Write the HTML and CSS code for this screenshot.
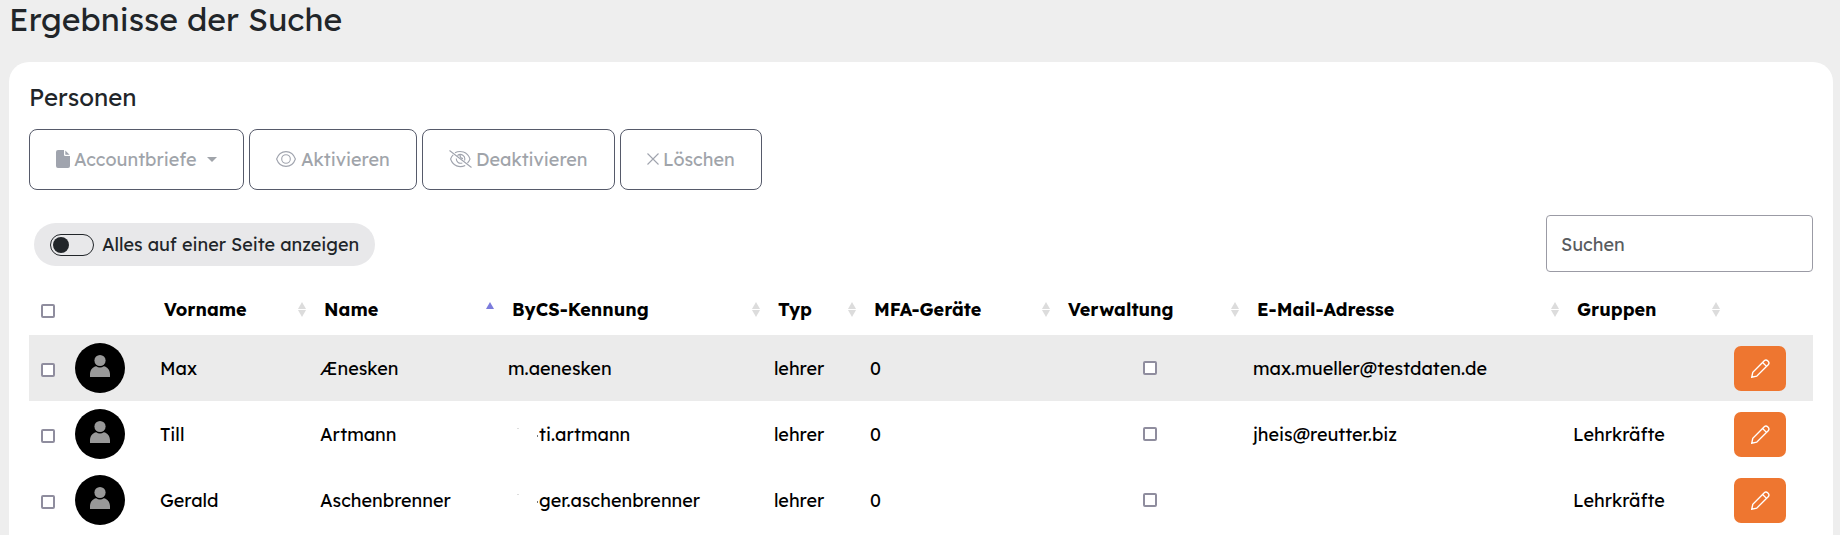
FILE: index.html
```html
<!DOCTYPE html>
<html lang="de">
<head>
<meta charset="utf-8">
<title>Ergebnisse der Suche</title>
<link rel="stylesheet" href="styles.css">
</head>
<body>
<svg class="defs" width="0" height="0">
  <symbol id="person" viewBox="0 0 50 50"><circle cx="25" cy="17.500" r="5.600"/><path d="M15 34v-2.500c0-4.500 2.600-7.700 6.200-8.300 2.200 1.700 5.400 1.700 7.600 0 3.600.6 6.200 3.800 6.200 8.300V34z"/></symbol>
  <symbol id="pencil" viewBox="0 0 18 18"><path d="M.7 17.300l1-4.700L12.800 1.500c1.900-1.700 5.400 1.500 3.700 3.700L5.400 16.300zM11 3.300l3.700 3.700"/></symbol>
</svg>
<h1 class="page-title">Ergebnisse der Suche</h1>
<main class="card">
  <h2 class="card-title">Personen</h2>
  <div class="actions">
    <button class="btn btn-letters" disabled><svg class="icon-file" width="14" height="18" viewBox="0 0 14 18"><path d="M2 0h6v4.500C8 5.500 8.500 6 9.500 6H14v10a2 2 0 0 1-2 2H2a2 2 0 0 1-2-2V2a2 2 0 0 1 2-2zM9.300.4l4.300 4.300H9.300z"/></svg><span>Accountbriefe</span><i class="caret"></i></button>
    <button class="btn btn-on" disabled><svg class="icon-line" width="20" height="16" viewBox="0 0 20 16"><path d="M.6 8C2.300 3.200 6 .6 10 .6S17.700 3.200 19.400 8C17.700 12.800 14 15.400 10 15.400S2.300 12.800.6 8z"/><circle cx="10" cy="8" r="4.300"/></svg><span>Aktivieren</span></button>
    <button class="btn btn-off" disabled><svg class="icon-line" width="23" height="18" viewBox="0 0 23 18"><path d="M.5.500l22 17M6 2.800C11 .1 18.500 1.500 21 9c-.5 1.600-1.400 2.900-2.500 4M4.200 4.800C2.900 6 2.100 7.400 1.600 9c2.300 7 9 9.200 14.600 6.400M8.500 5.500c3.500-2.800 8.500.5 7 5M7.300 8.500c-.2 3.700 3 5.500 6 4.400M11 5c-.1 2 .9 3.300 3 3.600"/></svg><span>Deaktivieren</span></button>
    <button class="btn btn-del" disabled><svg class="icon-line" width="12" height="12" viewBox="0 0 12 12"><path d="M.5.500l11 11M11.500.500l-11 11"/></svg><span>Löschen</span></button>
  </div>
  <div class="toolbar">
    <label class="switch"><i class="track"><i class="knob"></i></i><span>Alles auf einer Seite anzeigen</span></label>
    <input class="search" type="text" placeholder="Suchen">
  </div>
  <table class="people">
    <colgroup><col class="c-check"><col class="c-avatar"><col class="c-first"><col class="c-name"><col class="c-id"><col class="c-type"><col class="c-mfa"><col class="c-admin"><col class="c-mail"><col class="c-groups"><col class="c-edit"></colgroup>
    <thead><tr>
      <th class="check"><i class="box"></i></th><th></th>
      <th><div class="head"><span>Vorname</span><i class="sort"></i></div></th>
      <th><div class="head"><span>Name</span><i class="sort asc"></i></div></th>
      <th><div class="head"><span>ByCS-Kennung</span><i class="sort"></i></div></th>
      <th><div class="head"><span>Typ</span><i class="sort"></i></div></th>
      <th><div class="head"><span>MFA-Geräte</span><i class="sort"></i></div></th>
      <th><div class="head"><span>Verwaltung</span><i class="sort"></i></div></th>
      <th><div class="head"><span>E-Mail-Adresse</span><i class="sort"></i></div></th>
      <th><div class="head"><span>Gruppen</span><i class="sort"></i></div></th>
      <th></th>
    </tr></thead>
    <tbody>
      <tr class="active"><td class="check"><i class="box"></i></td><td class="pic"><svg class="avatar"><use href="#person"/></svg></td><td>Max</td><td>Ænesken</td><td>m.aenesken</td><td>lehrer</td><td>0</td><td class="admin"><i class="box"></i></td><td>max.mueller@testdaten.de</td><td></td><td class="edit"><button class="edit-btn"><svg width="19" height="19"><use href="#pencil"/></svg></button></td></tr>
      <tr><td class="check"><i class="box"></i></td><td class="pic"><svg class="avatar"><use href="#person"/></svg></td><td>Till</td><td>Artmann</td><td class="short">ti.artmann</td><td>lehrer</td><td>0</td><td class="admin"><i class="box"></i></td><td>jheis@reutter.biz</td><td>Lehrkräfte</td><td class="edit"><button class="edit-btn"><svg width="19" height="19"><use href="#pencil"/></svg></button></td></tr>
      <tr><td class="check"><i class="box"></i></td><td class="pic"><svg class="avatar"><use href="#person"/></svg></td><td>Gerald</td><td>Aschenbrenner</td><td class="short">ger.aschenbrenner</td><td>lehrer</td><td>0</td><td class="admin"><i class="box"></i></td><td></td><td>Lehrkräfte</td><td class="edit"><button class="edit-btn"><svg width="19" height="19"><use href="#pencil"/></svg></button></td></tr>
    </tbody>
  </table>
</main>
</body>
</html>
```
FILE: styles.css
```css
* { box-sizing: border-box; }
html { overflow: hidden; }
body {
  margin: 0;
  height: 535px;
  padding: 0 7px 0 9px;
  overflow: hidden;
  background: #eee;
  color: #212529;
  font: 400 18px/26px Lexend, Inter, "Noto Sans", sans-serif;
}
.defs { display: block; }
.page-title { margin: 0; height: 62px; font-size: 32px; font-weight: 400; line-height: 38px; }
.card { height: 473px; padding: 20px 20px 0; border-radius: 20px 20px 0 0; background: #fff; overflow: hidden; }
.card-title { margin: 0; height: 47px; font-size: 24px; font-weight: 400; line-height: 31px; }
.actions { display: flex; gap: 5px; }
.btn {
  display: flex; align-items: center; gap: 5px;
  height: 61px; padding: 0 0 0 26px; border: 1px solid #565a6a; border-radius: 8px;
  background: #fff; color: #a0a4aa; font: inherit;
}
.btn-letters { width: 215px; gap: 4px; }
.btn-on { width: 168px; }
.btn-off { width: 193px; gap: 4px; }
.btn-del { width: 142px; gap: 4px; }
.icon-file { fill: #a0a4ae; margin-top: -2px; }
.icon-line { fill: none; stroke: #a0a4ae; stroke-width: 1.1; margin-top: -2px; }
.caret { margin-left: 6px; border: 5px solid transparent; border-top-color: #a0a4aa; border-bottom: 0; }
.toolbar { display: flex; justify-content: space-between; align-items: center; margin-top: 25px; height: 57px; }
.switch { display: flex; align-items: center; gap: 8px; width: 341px; height: 43px; margin-left: 5px; margin-top: 2px; padding-left: 16px; border-radius: 22px; background: #e8e8ea; }
.track { display: flex; align-items: center; width: 44px; height: 22px; padding-left: 2px; border: 1px solid #212529; border-radius: 11px; }
.knob { width: 16px; height: 16px; border-radius: 50%; background: #212529; }
.search { width: 267px; height: 57px; padding: 2px 14px 0; border: 1px solid #9b9ba5; border-radius: 4px; background: #fff; font: inherit; }
.search::placeholder { color: #595c5f; opacity: 1; }
.people { width: 1784px; margin-top: 10px; table-layout: fixed; border-collapse: collapse; color: #000; }
.c-check { width: 38px; } .c-avatar { width: 85px; } .c-first { width: 160px; } .c-name { width: 188px; }
.c-id { width: 266px; } .c-type { width: 96px; } .c-mfa { width: 194px; } .c-admin { width: 189px; }
.c-mail { width: 320px; } .c-groups { width: 161px; } .c-edit { width: 87px; }
th { height: 53px; padding: 2px 6px 0 12px; text-align: left; font-weight: 700; }
td { height: 66px; padding: 1px 8px 0; white-space: nowrap; }
.active { background: #ebebeb; }
.head { display: flex; align-items: center; justify-content: space-between; white-space: nowrap; }
.sort { display: flex; flex-direction: column; gap: 1px; width: 8px; height: 15px; }
.sort::before, .sort::after { content: ""; border: 4px solid transparent; }
.sort::before { border-bottom: 7px solid #dcdcdc; border-top: 0; }
.sort::after { border-top: 7px solid #dcdcdc; border-bottom: 0; }
.asc::before { border-bottom-color: #7b7bdc; }
.asc::after { visibility: hidden; }
.box { display: block; width: 14px; height: 14px; border: 2px solid #8f8d9e; border-radius: 2px; background: #fff; }
.check { padding: 4px 0 0 12px; }
.pic { padding: 0 8px; }
.avatar { display: block; width: 50px; height: 50px; border-radius: 50%; background: #000; fill: #999; }
.admin { padding: 0 9px 0 8px; }
.admin .box { margin: 0 auto; }
.short { position: relative; padding-left: 39px; }
.short::before { content: ""; position: absolute; left: 37px; top: 34px; width: 1px; height: 2px; background: #777; }
.short::after { content: ""; position: absolute; left: 17px; top: 27px; width: 2px; height: 1px; background: #ddd; }
.edit { padding-top: 0; }
.edit-btn { display: flex; align-items: center; justify-content: center; width: 52px; height: 45px; margin-top: 1px; padding: 0; border: 0; border-radius: 7px; background: #ee7630; fill: none; stroke: #fff; stroke-width: 1.3; }
```
